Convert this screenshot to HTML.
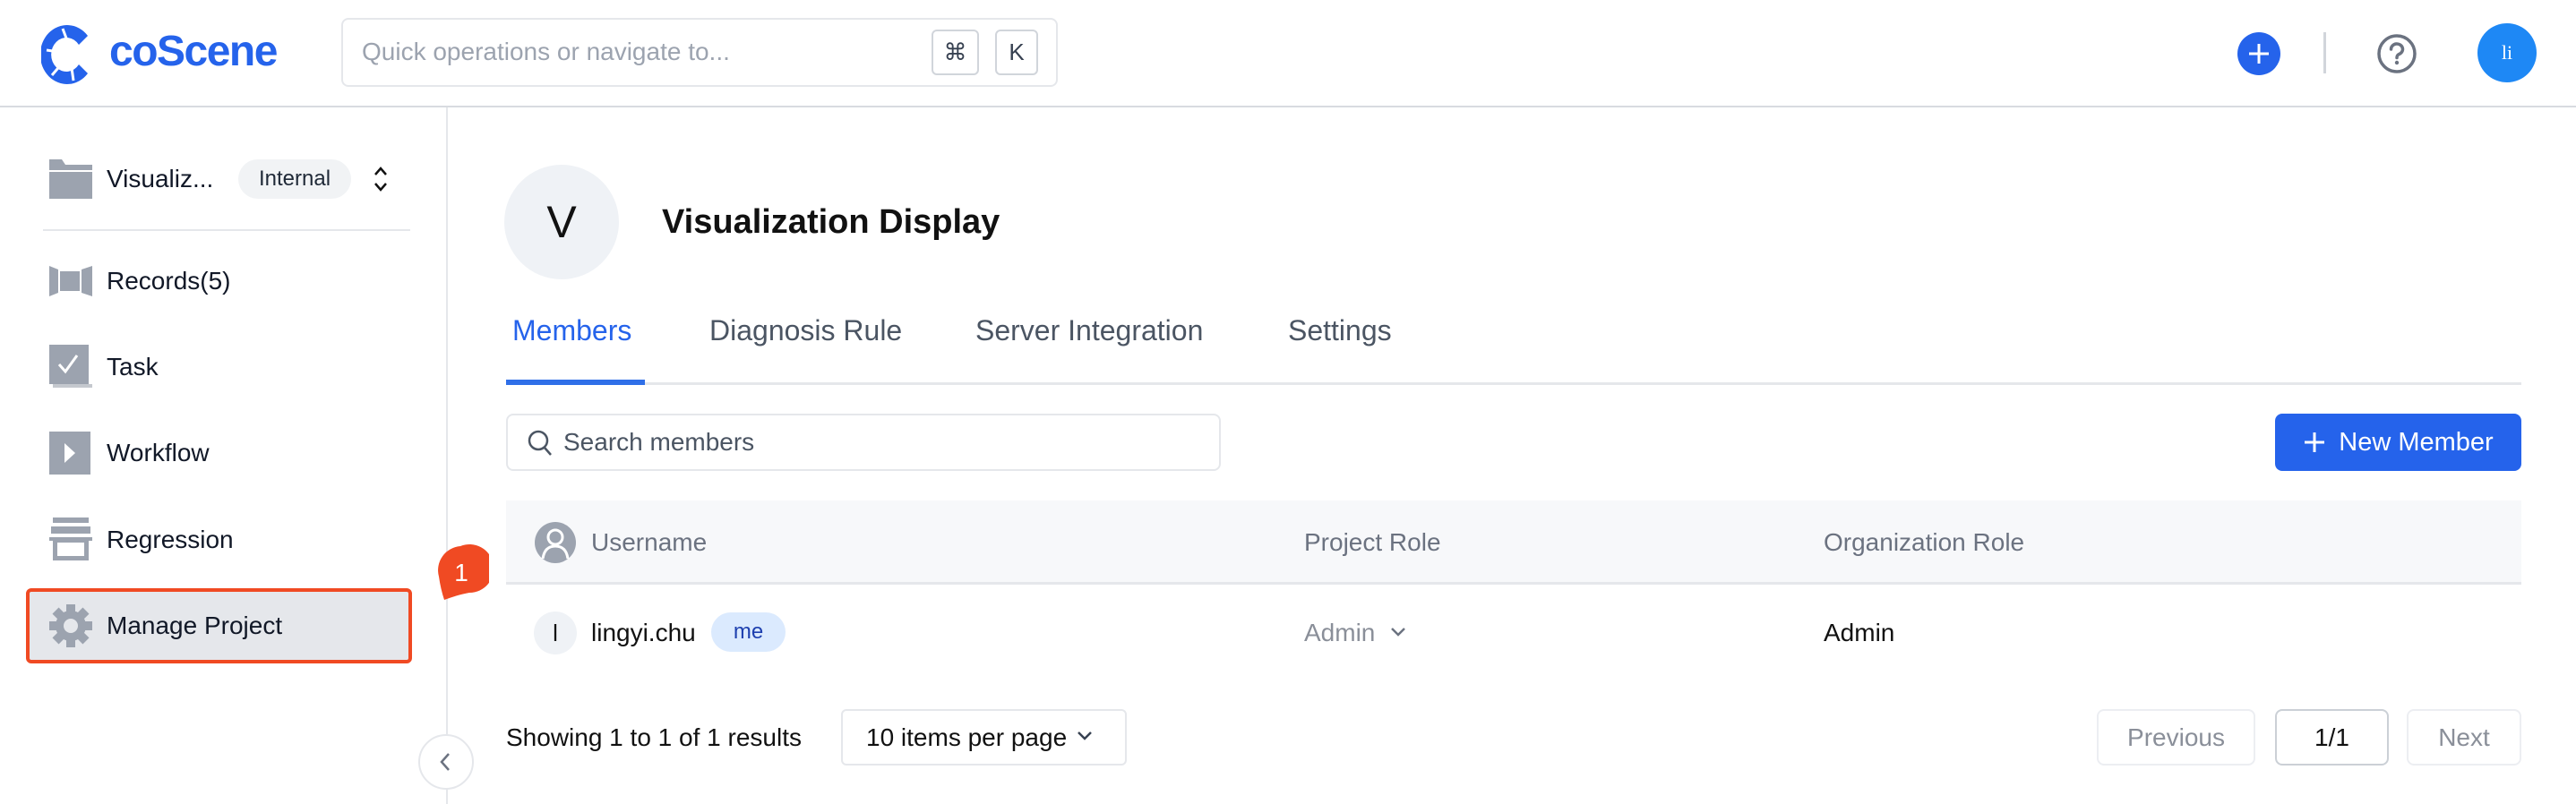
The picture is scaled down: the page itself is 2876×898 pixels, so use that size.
<!DOCTYPE html>
<html><head><meta charset="utf-8"><style>
*{box-sizing:border-box;margin:0;padding:0}
body{width:2876px;height:898px;background:#fff;font-family:"Liberation Sans",sans-serif;position:relative;overflow:hidden;color:#111827}
.a{position:absolute}
.t{position:absolute;white-space:nowrap;line-height:1}
.nav{font-size:28px;color:#111827}
.btn{position:absolute;border:2px solid #eceef2;border-radius:8px;display:flex;align-items:center;justify-content:center;font-size:28px;color:#8a8f99}
</style></head><body>
<!-- header -->
<div class="a" style="left:0;top:118px;width:2876px;height:2px;background:#d8dbe0"></div>
<svg class="a" style="left:46px;top:26px" width="62" height="70" viewBox="0 0 62 70">
<path d="M52 14 A30 33 0 1 0 52 56 L42 46 A17 19 0 1 1 42 24 Z" fill="#2563eb"/>
<path d="M24 6 L30 22 M6 30 L20 32 M12 58 L24 44 M36 64 L34 50" stroke="#fff" stroke-width="3"/>
</svg>
<div class="t" style="left:122px;top:34px;font-size:48px;font-weight:bold;color:#2563eb;letter-spacing:-1.5px">coScene</div>
<div class="a" style="left:381px;top:20px;width:800px;height:77px;border:2px solid #e5e7eb;border-radius:8px"></div>
<div class="t" style="left:404px;top:44px;font-size:28px;color:#9ca3af">Quick operations or navigate to...</div>
<div class="a" style="left:1040px;top:33px;width:53px;height:51px;border:2px solid #d1d5db;border-radius:6px;font-size:26px;display:flex;align-items:center;justify-content:center;color:#374151">⌘</div>
<div class="a" style="left:1111px;top:33px;width:48px;height:51px;border:2px solid #d1d5db;border-radius:6px;font-size:26px;display:flex;align-items:center;justify-content:center;color:#374151">K</div>
<svg class="a" style="left:2497px;top:35px" width="50" height="50"><circle cx="25" cy="25" r="24" fill="#2563eb"/><path d="M25 14V36M14 25H36" stroke="#fff" stroke-width="3"/></svg>
<div class="a" style="left:2594px;top:36px;width:3px;height:46px;background:#d1d5db"></div>
<svg class="a" style="left:2652px;top:36px" width="48" height="48"><circle cx="24" cy="24" r="20" fill="none" stroke="#6b7280" stroke-width="3.5"/><path d="M17.5 19a6.5 6 0 1 1 9 5.5c-2 1-2.5 2-2.5 4" fill="none" stroke="#6b7280" stroke-width="3.5" stroke-linecap="round"/><circle cx="24" cy="34" r="2.2" fill="#6b7280"/></svg>
<div class="a" style="left:2766px;top:26px;width:66px;height:66px;border-radius:50%;background:#1e88f5;color:#fff;font-family:'Liberation Serif',serif;font-size:22px;display:flex;align-items:center;justify-content:center">li</div>
<!-- sidebar -->
<div class="a" style="left:498px;top:120px;width:2px;height:778px;background:#e5e7eb"></div>
<svg class="a" style="left:55px;top:178px" width="48" height="44"><path d="M0 0H14L18 6H48V12H0Z" fill="#9ca3af"/><rect x="0" y="14" width="48" height="30" fill="#9ca3af"/></svg>
<div class="t nav" style="left:119px;top:186px">Visualiz...</div>
<div class="a" style="left:266px;top:178px;width:126px;height:44px;border-radius:22px;background:#f1f3f5;font-size:24px;display:flex;align-items:center;justify-content:center;color:#1f2937">Internal</div>
<svg class="a" style="left:414px;top:184px" width="22" height="32"><path d="M5 11L11 4L17 11M5 21L11 28L17 21" fill="none" stroke="#111" stroke-width="2.5"/></svg>
<div class="a" style="left:48px;top:256px;width:410px;height:2px;background:#e5e7eb"></div>
<svg class="a" style="left:55px;top:297px" width="48" height="34"><path d="M0 0L10 4V30L0 34Z" fill="#9ca3af"/><rect x="12" y="6" width="22" height="22" fill="#9ca3af"/><path d="M48 0L36 4V30L48 34Z" fill="#9ca3af"/></svg>
<div class="t nav" style="left:119px;top:300px">Records(5)</div>
<svg class="a" style="left:55px;top:385px" width="48" height="50"><rect x="0" y="0" width="44" height="44" fill="#9ca3af"/><rect x="4" y="44" width="44" height="4" fill="#c4c8ce"/><path d="M11 22L18 30L31 12" fill="none" stroke="#fff" stroke-width="3"/></svg>
<div class="t nav" style="left:119px;top:396px">Task</div>
<svg class="a" style="left:55px;top:482px" width="48" height="48"><rect width="46" height="48" fill="#9ca3af"/><path d="M17 13L29 24L17 35Z" fill="#fff"/></svg>
<div class="t nav" style="left:119px;top:492px">Workflow</div>
<svg class="a" style="left:55px;top:578px" width="48" height="48"><rect x="4" y="0" width="40" height="6" fill="#9ca3af"/><rect x="2" y="10" width="44" height="8" fill="#9ca3af"/><path d="M0 22H48V26H44V48H4V26H0Z" fill="#9ca3af"/><rect x="9" y="28" width="30" height="15" fill="#fff"/></svg>
<div class="t nav" style="left:119px;top:589px">Regression</div>
<div class="a" style="left:29px;top:657px;width:431px;height:84px;background:#e5e7eb;border:4px solid #f04a23;border-radius:6px"></div>
<svg class="a" style="left:55px;top:675px" width="48" height="48" viewBox="0 0 48 48"><g fill="#9ca3af"><circle cx="24" cy="24" r="17"/><g><rect x="19" y="0" width="10" height="10"/><rect x="19" y="38" width="10" height="10"/><rect x="0" y="19" width="10" height="10"/><rect x="38" y="19" width="10" height="10"/><rect x="19" y="0" width="10" height="10" transform="rotate(45 24 24)"/><rect x="19" y="38" width="10" height="10" transform="rotate(45 24 24)"/><rect x="0" y="19" width="10" height="10" transform="rotate(45 24 24)"/><rect x="38" y="19" width="10" height="10" transform="rotate(45 24 24)"/></g></g><circle cx="24" cy="24" r="8" fill="#e5e7eb"/></svg>
<div class="t nav" style="left:119px;top:685px">Manage Project</div>
<svg class="a" style="left:484px;top:608px" width="62" height="64"><path d="M30 2A27 27 0 1 1 40 54Q28 56 12 62Q8 50 6 36A27 27 0 0 1 30 2Z" fill="#f04a23"/><text x="31" y="41" font-size="28" fill="#fff" text-anchor="middle" font-family="Liberation Sans">1</text></svg>
<div class="a" style="left:467px;top:820px;width:62px;height:62px;border-radius:50%;border:2px solid #e5e7eb;background:#fff"></div>
<svg class="a" style="left:488px;top:838px" width="20" height="26"><path d="M13 4L5 13L13 22" fill="none" stroke="#6b7280" stroke-width="2.5"/></svg>
<!-- main -->
<div class="a" style="left:563px;top:184px;width:128px;height:128px;border-radius:50%;background:#eff2f6;font-size:50px;display:flex;align-items:center;justify-content:center;color:#111">V</div>
<div class="t" style="left:739px;top:229px;font-size:38px;font-weight:bold;color:#111">Visualization Display</div>
<div class="t" style="left:572px;top:353px;font-size:32px;color:#2563eb">Members</div>
<div class="t" style="left:792px;top:353px;font-size:32px;color:#4b5563">Diagnosis Rule</div>
<div class="t" style="left:1089px;top:353px;font-size:32px;color:#4b5563">Server Integration</div>
<div class="t" style="left:1438px;top:353px;font-size:32px;color:#4b5563">Settings</div>
<div class="a" style="left:565px;top:427px;width:2250px;height:3px;background:#e5e7eb"></div>
<div class="a" style="left:565px;top:424px;width:155px;height:6px;background:#2f6fe8"></div>
<div class="a" style="left:565px;top:462px;width:798px;height:64px;border:2px solid #e5e7eb;border-radius:8px"></div>
<svg class="a" style="left:588px;top:479px" width="30" height="32"><circle cx="13" cy="13" r="10" fill="none" stroke="#4b5563" stroke-width="2.5"/><path d="M20 21L27 29" stroke="#4b5563" stroke-width="2.5"/></svg>
<div class="t" style="left:629px;top:480px;font-size:28px;color:#4b5563">Search members</div>
<div class="a" style="left:2540px;top:462px;width:275px;height:64px;background:#2563eb;border-radius:8px;color:#fff;font-size:29px;display:flex;align-items:center;justify-content:center;gap:14px"><svg width="26" height="26"><path d="M13 2V24M2 13H24" stroke="#fff" stroke-width="3"/></svg>New Member</div>
<div class="a" style="left:565px;top:559px;width:2250px;height:94px;background:#f7f8fa;border-bottom:3px solid #e5e7eb"></div>
<svg class="a" style="left:596px;top:582px" width="48" height="48"><circle cx="24" cy="24" r="23" fill="#9ca3af"/><circle cx="24" cy="18" r="8" fill="none" stroke="#fff" stroke-width="3"/><path d="M10 42Q12 28 24 28Q36 28 38 42" fill="none" stroke="#fff" stroke-width="3"/></svg>
<div class="t" style="left:660px;top:592px;font-size:28px;color:#6b7280">Username</div>
<div class="t" style="left:1456px;top:592px;font-size:28px;color:#6b7280">Project Role</div>
<div class="t" style="left:2036px;top:592px;font-size:28px;color:#6b7280">Organization Role</div>
<div class="a" style="left:596px;top:683px;width:48px;height:48px;border-radius:50%;background:#eff2f6;font-size:26px;display:flex;align-items:center;justify-content:center;color:#111">l</div>
<div class="t" style="left:660px;top:693px;font-size:28px;color:#111">lingyi.chu</div>
<div class="a" style="left:794px;top:684px;width:83px;height:44px;border-radius:22px;background:#dbeafe;color:#1e40af;font-size:24px;display:flex;align-items:center;justify-content:center">me</div>
<div class="t" style="left:1456px;top:693px;font-size:28px;color:#8a8f99">Admin</div>
<svg class="a" style="left:1550px;top:696px" width="22" height="20"><path d="M4 6L11 13L18 6" fill="none" stroke="#6b7280" stroke-width="2.5"/></svg>
<div class="t" style="left:2036px;top:693px;font-size:28px;color:#111">Admin</div>
<div class="t" style="left:565px;top:810px;font-size:28px;color:#111">Showing 1 to 1 of 1 results</div>
<div class="a" style="left:939px;top:792px;width:319px;height:63px;border:2px solid #e5e7eb;border-radius:6px"></div>
<div class="t" style="left:967px;top:810px;font-size:28px;color:#111">10 items per page</div>
<svg class="a" style="left:1200px;top:812px" width="22" height="20"><path d="M4 6L11 13L18 6" fill="none" stroke="#374151" stroke-width="2.5"/></svg>
<div class="btn" style="left:2341px;top:792px;width:177px;height:63px">Previous</div>
<div class="btn" style="left:2540px;top:792px;width:127px;height:63px;border-color:#cbd0d6;color:#111">1/1</div>
<div class="btn" style="left:2687px;top:792px;width:128px;height:63px">Next</div>
</body></html>
